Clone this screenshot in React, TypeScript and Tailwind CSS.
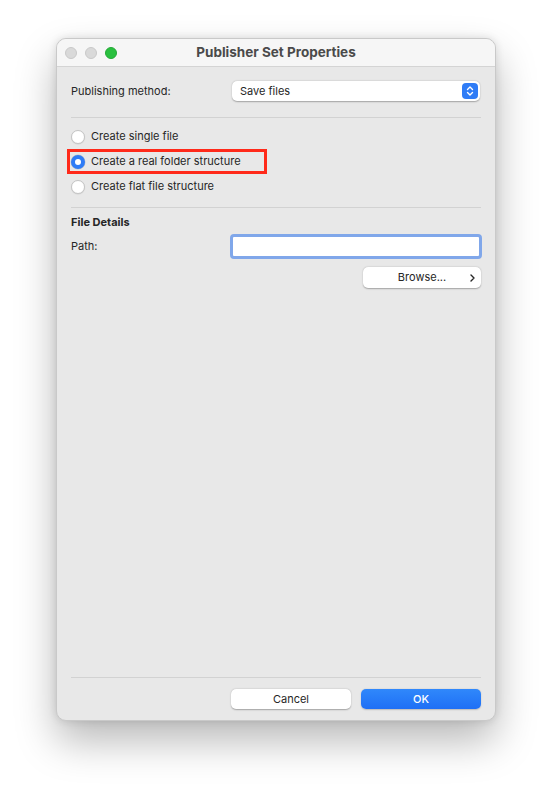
import React from "react";

const font = { fontFamily: "Inter, 'Liberation Sans', sans-serif" };

function Radio({ checked, label }: { checked?: boolean; label: string }) {
  return (
    <div className="flex items-center h-[25px]">
      {checked ? (
        <div className="w-[14px] h-[14px] rounded-full bg-[#2f7cf6] flex items-center justify-center shadow-[0_0_0_0.5px_rgba(0,0,0,0.15)]">
          <div className="w-[6px] h-[6px] rounded-full bg-white" />
        </div>
      ) : (
        <div className="w-[14px] h-[14px] rounded-full bg-white border border-[#c4c4c4] shadow-[0_0.5px_1px_rgba(0,0,0,0.1)]" />
      )}
      <span className="ml-[6px] text-[11px] text-[#262626]">{label}</span>
    </div>
  );
}

export default function App() {
  return (
    <div className="w-[552px] h-[795px] bg-white pt-[38px]" style={font}>
      <div className="mx-auto w-[440px] h-[683px] rounded-[10px] bg-[#e8e8e8] flex flex-col overflow-hidden border border-[#c9c9c9] shadow-[0_20px_40px_rgba(0,0,0,0.28),0_0_8px_rgba(0,0,0,0.12)]">
        {/* Title bar */}
        <div className="relative h-[28px] bg-[#f6f6f6] border-b border-[#d4d4d4] flex items-center justify-center shrink-0">
          <div className="absolute left-[8px] top-[8px] flex gap-[8px]">
            <div className="w-[12px] h-[12px] rounded-full bg-[#d9d9d9] border border-[#c8c8c8]" />
            <div className="w-[12px] h-[12px] rounded-full bg-[#d9d9d9] border border-[#c8c8c8]" />
            <div className="w-[12px] h-[12px] rounded-full bg-[#2ac03f] border border-[#24a936]" />
          </div>
          <span className="text-[13.5px] font-bold text-[#4a4a4a]">Publisher Set Properties</span>
        </div>

        {/* Body */}
        <div className="flex-1 flex flex-col px-[14px]">
          <div className="mt-[14px] flex items-center h-[20px]">
            <span className="w-[161px] text-[11px] text-[#262626]">Publishing method:</span>
            <div className="relative flex-1 h-[20px] mr-[1px] bg-white rounded-[5px] shadow-[0_0.5px_1.5px_rgba(0,0,0,0.3)] flex items-center pl-[8px]">
              <span className="text-[11px] text-[#262626]">Save files</span>
              <div className="absolute right-[2px] top-[2px] w-[16px] h-[16px] rounded-[4px] bg-[#2f7cf6] flex items-center justify-center">
                <svg width="8" height="12" viewBox="0 0 8 12" fill="none" stroke="white" strokeWidth="1.4" strokeLinecap="round" strokeLinejoin="round">
                  <path d="M1.5 4.5 L4 2 L6.5 4.5" />
                  <path d="M1.5 7.5 L4 10 L6.5 7.5" />
                </svg>
              </div>
            </div>
          </div>

          <div className="mt-[16px] h-px bg-[#d2d2d2]" />

          <div className="mt-[6px] flex flex-col">
            <Radio label="Create single file" />
            <div className="relative">
              <div className="absolute left-[-4px] top-[0px] w-[200px] h-[25px] border-[3px] border-[#ff2a1a]" />
              <Radio checked label="Create a real folder structure" />
            </div>
            <Radio label="Create flat file structure" />
          </div>

          <div className="mt-[8px] h-px bg-[#d2d2d2]" />

          <div className="mt-[7px] text-[11px] font-bold text-[#262626] leading-[14px]">File Details</div>

          <div className="mt-[5px] flex items-center h-[25px]">
            <span className="w-[159px] text-[11px] text-[#262626]">Path:</span>
            <div className="flex-1 h-[25px] -mr-[1px] rounded-[4px] bg-white border-[3px] border-[#80a7ea]" />
          </div>

          <div className="mt-[8px] flex justify-end">
            <div className="relative w-[118px] h-[21px] bg-white rounded-[5px] shadow-[0_0.5px_1.5px_rgba(0,0,0,0.3)] flex items-center justify-center">
              <span className="text-[11px] text-[#262626]">Browse...</span>
              <svg className="absolute right-[6px] top-[7px]" width="5" height="8" viewBox="0 0 5 8" fill="none" stroke="#262626" strokeWidth="1.4" strokeLinecap="round" strokeLinejoin="round">
                <path d="M1 1 L4 4 L1 7" />
              </svg>
            </div>
          </div>

          <div className="flex-1" />

          <div className="h-px bg-[#d2d2d2]" />

          <div className="mt-[11px] mb-[11px] flex justify-end gap-[10px]">
            <div className="w-[120px] h-[20px] bg-white rounded-[5px] shadow-[0_0.5px_1.5px_rgba(0,0,0,0.3)] flex items-center justify-center">
              <span className="text-[11px] text-[#262626]">Cancel</span>
            </div>
            <div className="w-[120px] h-[20px] rounded-[5px] bg-gradient-to-b from-[#3088fb] to-[#1f6ff5] shadow-[0_0.5px_1.5px_rgba(0,0,0,0.2)] flex items-center justify-center">
              <span className="text-[11px] font-medium text-white">OK</span>
            </div>
          </div>
        </div>
      </div>
    </div>
  );
}
